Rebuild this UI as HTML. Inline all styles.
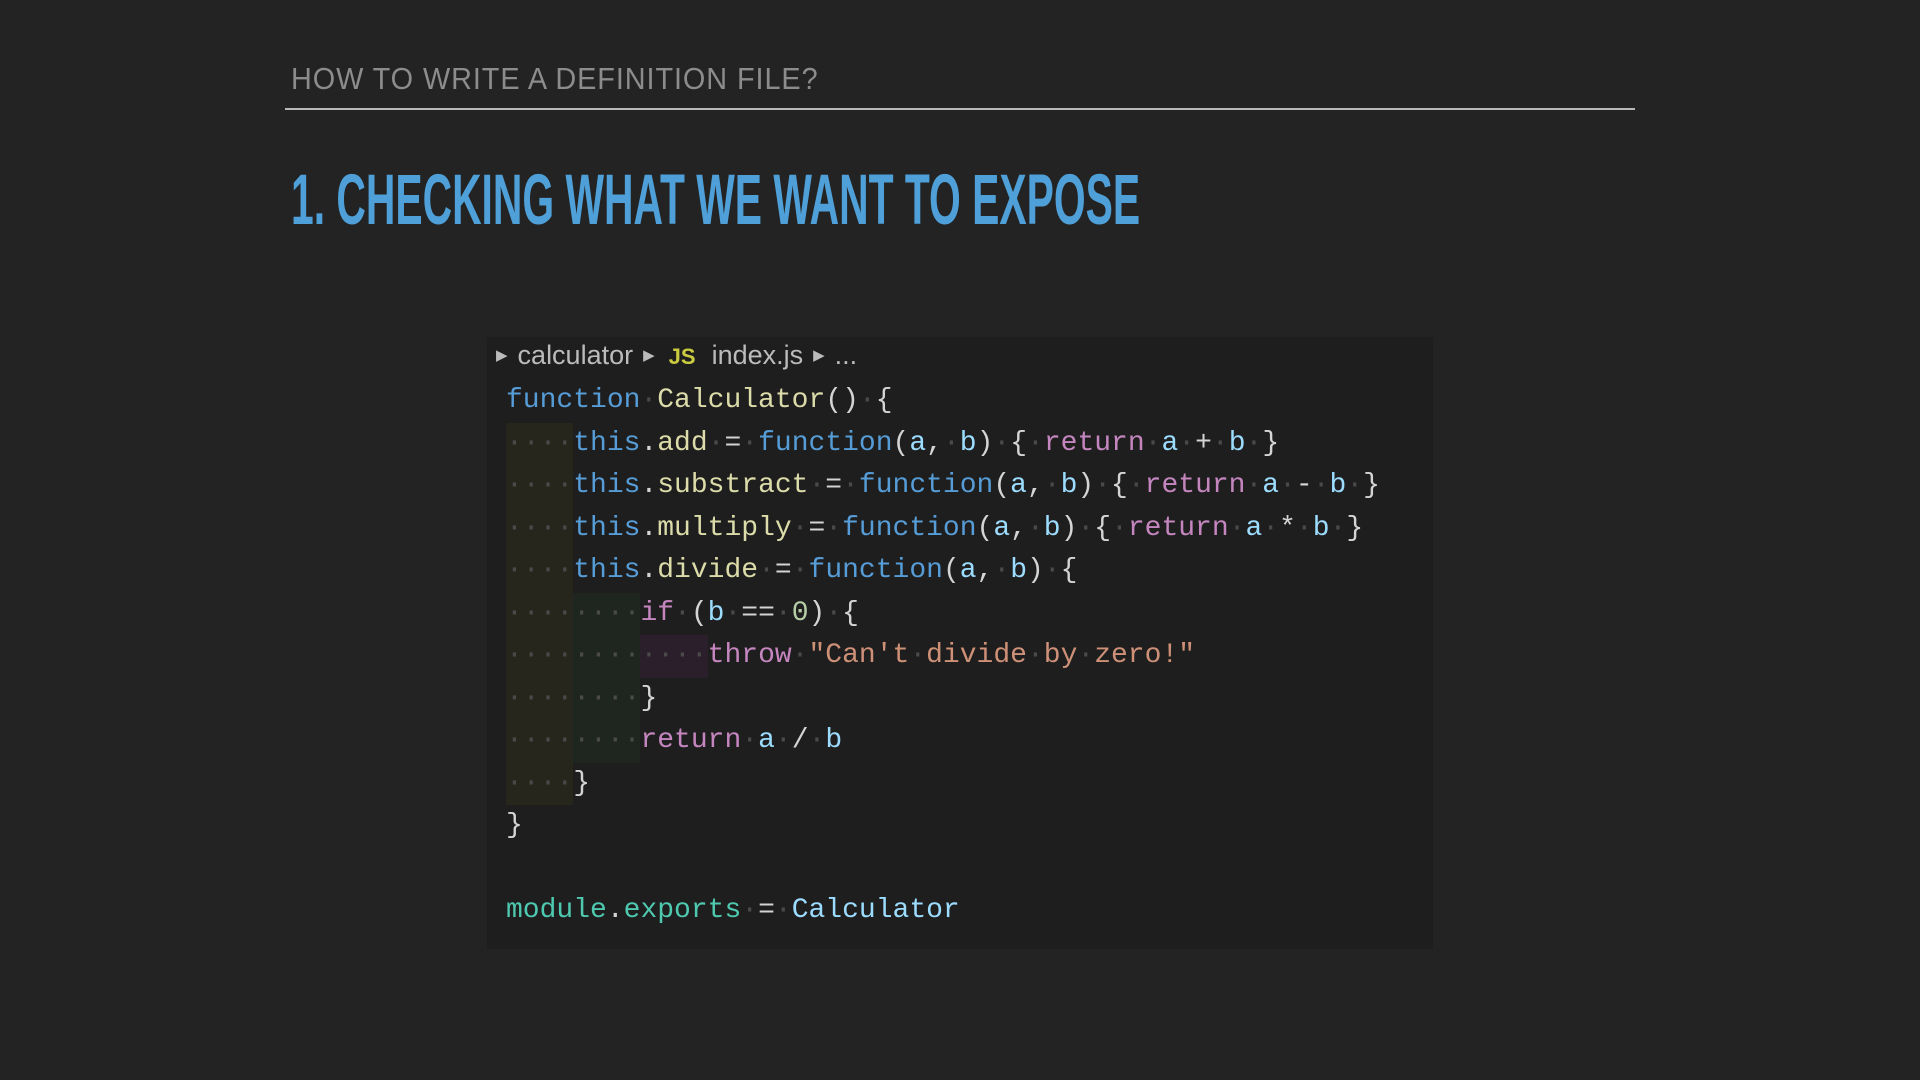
<!DOCTYPE html>
<html><head><meta charset="utf-8"><style>
html,body{margin:0;padding:0;}
body{width:1920px;height:1080px;background:#232323;position:relative;overflow:hidden;font-family:"Liberation Sans",sans-serif;}
.sub{position:absolute;left:291px;top:61px;font-size:31px;color:#8c8c8c;letter-spacing:1px;white-space:nowrap;transform-origin:0 0;transform:scaleX(0.93);}
.rule{position:absolute;left:285px;top:108px;width:1350px;height:2px;background:#b8b8b8;}
.title{position:absolute;left:291px;top:160px;font-size:71px;font-weight:bold;color:#4fa0d8;white-space:nowrap;transform-origin:0 0;transform:scaleX(0.575);}
.code{position:absolute;left:487px;top:337px;width:946px;height:612px;background:#1e1e1e;}
.bc{position:absolute;left:496px;top:339px;font-size:27px;color:#bbb;white-space:nowrap;line-height:32px;}
.bc .tri{font-size:15px;color:#bbb;vertical-align:4px;margin:0 10px 0 0;}
.bc .js{color:#cbcb41;font-weight:bold;font-size:22px;margin:0 16px 0 4px;}
.bc .sp{margin-right:10px;}
pre{position:absolute;left:506px;top:380px;margin:0;font-family:"Liberation Mono",monospace;font-size:28px;line-height:42.5px;color:#d4d4d4;}
.ln{display:block;height:42.5px;white-space:pre;}
.d{color:#4a4a4a;}
.g1,.g2,.g3{display:inline-block;height:42.5px;vertical-align:top;}
.g1{background:#26261c;}
.g2{background:#1f261f;}
.g3{background:#2a1f2a;}
.k{color:#569cd6;}.f{color:#dcdcaa;}.p{color:#9cdcfe;}.r{color:#c586c0;}.s{color:#ce9178;}.n{color:#b5cea8;}.t{color:#4ec9b0;}
</style></head><body>
<div class="sub">HOW TO WRITE A DEFINITION FILE?</div>
<div class="rule"></div>
<div class="title">1. CHECKING WHAT WE WANT TO EXPOSE</div>
<div class="code"></div>
<div class="bc"><span class="tri">▶</span><span class="sp">calculator</span><span class="tri">▶</span><span class="js">JS</span><span class="sp">index.js</span><span class="tri">▶</span>...</div>
<pre><span class="ln"><span class="k">function</span><span class="d">·</span><span class="f">Calculator</span>()<span class="d">·</span>{</span><span class="ln"><span class="g1"><span class="d">····</span></span><span class="k">this</span>.<span class="f">add</span><span class="d">·</span>=<span class="d">·</span><span class="k">function</span>(<span class="p">a</span>,<span class="d">·</span><span class="p">b</span>)<span class="d">·</span>{<span class="d">·</span><span class="r">return</span><span class="d">·</span><span class="p">a</span><span class="d">·</span>+<span class="d">·</span><span class="p">b</span><span class="d">·</span>}</span><span class="ln"><span class="g1"><span class="d">····</span></span><span class="k">this</span>.<span class="f">substract</span><span class="d">·</span>=<span class="d">·</span><span class="k">function</span>(<span class="p">a</span>,<span class="d">·</span><span class="p">b</span>)<span class="d">·</span>{<span class="d">·</span><span class="r">return</span><span class="d">·</span><span class="p">a</span><span class="d">·</span>-<span class="d">·</span><span class="p">b</span><span class="d">·</span>}</span><span class="ln"><span class="g1"><span class="d">····</span></span><span class="k">this</span>.<span class="f">multiply</span><span class="d">·</span>=<span class="d">·</span><span class="k">function</span>(<span class="p">a</span>,<span class="d">·</span><span class="p">b</span>)<span class="d">·</span>{<span class="d">·</span><span class="r">return</span><span class="d">·</span><span class="p">a</span><span class="d">·</span>*<span class="d">·</span><span class="p">b</span><span class="d">·</span>}</span><span class="ln"><span class="g1"><span class="d">····</span></span><span class="k">this</span>.<span class="f">divide</span><span class="d">·</span>=<span class="d">·</span><span class="k">function</span>(<span class="p">a</span>,<span class="d">·</span><span class="p">b</span>)<span class="d">·</span>{</span><span class="ln"><span class="g1"><span class="d">····</span></span><span class="g2"><span class="d">····</span></span><span class="r">if</span><span class="d">·</span>(<span class="p">b</span><span class="d">·</span>==<span class="d">·</span><span class="n">0</span>)<span class="d">·</span>{</span><span class="ln"><span class="g1"><span class="d">····</span></span><span class="g2"><span class="d">····</span></span><span class="g3"><span class="d">····</span></span><span class="r">throw</span><span class="d">·</span><span class="s">"Can't<span class="d">·</span>divide<span class="d">·</span>by<span class="d">·</span>zero!"</span></span><span class="ln"><span class="g1"><span class="d">····</span></span><span class="g2"><span class="d">····</span></span>}</span><span class="ln"><span class="g1"><span class="d">····</span></span><span class="g2"><span class="d">····</span></span><span class="r">return</span><span class="d">·</span><span class="p">a</span><span class="d">·</span>/<span class="d">·</span><span class="p">b</span></span><span class="ln"><span class="g1"><span class="d">····</span></span>}</span><span class="ln">}</span><span class="ln"> </span><span class="ln"><span class="t">module</span>.<span class="t">exports</span><span class="d">·</span>=<span class="d">·</span><span class="p">Calculator</span></span></pre>
</body></html>
